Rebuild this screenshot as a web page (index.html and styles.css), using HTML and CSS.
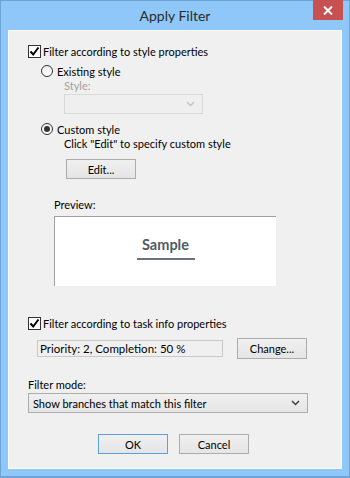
FILE: index.html
```html
<!DOCTYPE html>
<html lang="en">
<head>
    <meta charset="UTF-8">
    <title>Apply Filter</title>
    <link rel="stylesheet" href="styles.css">
</head>
<body>
    <div class="window">
        <div class="titlebar">
            <span class="title">Apply Filter</span>
            <button class="close-button" aria-label="Close">
                <svg width="10" height="9" viewBox="0 0 10 9"><path d="M1 0.5 L9 8.5 M9 0.5 L1 8.5" stroke="#fff" stroke-width="2"/></svg>
            </button>
        </div>

        <div class="client">
            <!-- Style properties -->
            <div class="check-row">
                <span class="checkbox checked">
                    <svg width="11" height="11" viewBox="0 0 11 11"><path d="M1.5 5.5 L4.2 8.5 L9.5 1.5" fill="none" stroke="#000" stroke-width="2"/></svg>
                </span>
                <span>Filter according to style properties</span>
            </div>

            <div class="radio-row">
                <span class="radio"></span>
                <span>Existing style</span>
            </div>
            <div class="field-label disabled">Style:</div>
            <div class="combo combo-disabled">
                <span class="combo-text"></span>
                <svg width="9" height="6" viewBox="0 0 9 6"><path d="M1 1 L4.5 4.5 L8 1" fill="none" stroke="#c4c4c4" stroke-width="1.5"/></svg>
            </div>

            <div class="radio-row radio-row-second">
                <span class="radio checked"></span>
                <span>Custom style</span>
            </div>
            <div class="hint">Click "Edit" to specify custom style</div>
            <button class="btn edit-button">Edit...</button>

            <div class="preview-label">Preview:</div>
            <div class="preview">
                <span class="sample">Sample</span>
                <span class="sample-line"></span>
            </div>

            <!-- Task info properties -->
            <div class="check-row task-row">
                <span class="checkbox checked">
                    <svg width="11" height="11" viewBox="0 0 11 11"><path d="M1.5 5.5 L4.2 8.5 L9.5 1.5" fill="none" stroke="#000" stroke-width="2"/></svg>
                </span>
                <span>Filter according to task info properties</span>
            </div>
            <div class="task-info">
                <div class="readonly-field">Priority: 2, Completion: 50 %</div>
                <button class="btn">Change...</button>
            </div>

            <!-- Filter mode -->
            <div class="mode-label">Filter mode:</div>
            <div class="combo mode-combo">
                <span class="combo-text">Show branches that match this filter</span>
                <svg width="9" height="6" viewBox="0 0 9 6"><path d="M1 1 L4.5 4.5 L8 1" fill="none" stroke="#404040" stroke-width="1.5"/></svg>
            </div>

            <div class="dialog-buttons">
                <button class="btn btn-default">OK</button>
                <button class="btn">Cancel</button>
            </div>
        </div>
    </div>
</body>
</html>
```

FILE: styles.css
```css
/* Base */
* {
    margin: 0;
    padding: 0;
    box-sizing: border-box;
}

body {
    font-family: 'Lato', 'Liberation Sans', sans-serif;
    font-size: 11px;
    color: #000;
    background-color: #8fc8f8;
}

/* Window frame */
.window {
    width: 350px;
    height: 478px;
    background-color: #8fc8f8;
    border: 1px solid #6fa3d6;
    border-bottom-width: 2px;
    display: flex;
    flex-direction: column;
}

.titlebar {
    height: 29px;
    position: relative;
    display: flex;
    align-items: center;
    justify-content: center;
}

.title {
    font-size: 14px;
    color: #2b2b2b;
    padding-bottom: 1px;
}

.close-button {
    position: absolute;
    top: -1px;
    right: 6px;
    width: 30px;
    height: 20px;
    border: none;
    background-color: #c75050;
    display: flex;
    align-items: center;
    justify-content: center;
}

/* Client area */
.client {
    margin: 0 7px 0 7px;
    height: 439px;
    background-color: #f0f0f0;
    box-shadow: inset 0 0 0 1px #fbfbfb;
    padding: 13px 0 0 20px;
    display: flex;
    flex-direction: column;
    align-items: flex-start;
}

.check-row,
.radio-row {
    height: 16px;
    display: flex;
    align-items: center;
    gap: 2px;
    white-space: nowrap;
}

.checkbox {
    width: 13px;
    height: 13px;
    border: 1px solid #333;
    background-color: #fff;
    display: flex;
    align-items: center;
    justify-content: center;
}

.radio-row {
    margin-top: 4px;
    margin-left: 13px;
    gap: 4px;
}

.radio-row-second {
    margin-top: 7px;
}

.radio {
    width: 12px;
    height: 12px;
    border-radius: 50%;
    border: 1px solid #333;
    background: linear-gradient(#f0f0f0, #fdfdfd);
    display: flex;
    align-items: center;
    justify-content: center;
}

.radio.checked::after {
    content: '';
    width: 6px;
    height: 6px;
    border-radius: 50%;
    background-color: #333;
}

.field-label,
.hint {
    margin-left: 36px;
    line-height: 14px;
}

.disabled {
    color: #a0a0a0;
}

/* Combo boxes */
.combo {
    height: 20px;
    display: flex;
    align-items: center;
    justify-content: space-between;
    padding: 0 7px 0 4px;
    border: 1px solid #acacac;
    background: linear-gradient(#f0f0f0, #e5e5e5);
}

.combo-disabled {
    margin-top: 1px;
    margin-left: 36px;
    width: 139px;
    border-color: #d9d9d9;
    background: #efefef;
}

.mode-combo {
    margin-top: 1px;
    width: 280px;
}

/* Buttons */
.btn {
    width: 70px;
    height: 20px;
    font-family: inherit;
    font-size: 11px;
    color: #000;
    border: 1px solid #acacac;
    background: linear-gradient(#f0f0f0, #e5e5e5);
}

.btn-default {
    border-color: #5aa0e6;
}

.edit-button {
    margin-top: 8px;
    margin-left: 38px;
}

/* Preview */
.preview-label {
    margin-top: 19px;
    margin-left: 26px;
    line-height: 14px;
}

.preview {
    margin-top: 4px;
    margin-left: 26px;
    width: 222px;
    height: 70px;
    background-color: #fff;
    border-top: 1px solid #a0a0a0;
    border-left: 1px solid #a0a0a0;
    display: flex;
    flex-direction: column;
    align-items: center;
    padding-top: 20px;
}

.sample {
    font-weight: bold;
    font-size: 14.5px;
    line-height: 16px;
    color: #505a68;
}

.sample-line {
    margin-top: 5px;
    width: 58px;
    height: 2px;
    background-color: #6b7380;
}

/* Task info */
.task-row {
    margin-top: 29px;
}

.task-info {
    margin-top: 7px;
    margin-left: 9px;
    height: 21px;
    display: flex;
    align-items: center;
    gap: 14px;
}

.task-info .btn {
    height: 21px;
}

.readonly-field {
    width: 186px;
    height: 17px;
    line-height: 15px;
    padding-left: 2px;
    border: 1px solid #c8c8c8;
    background-color: #f0f0f0;
    font-size: 11.5px;
    white-space: nowrap;
}

/* Filter mode */
.mode-label {
    margin-top: 19px;
    line-height: 14px;
}

.dialog-buttons {
    margin-top: 21px;
    margin-left: 70px;
    display: flex;
    gap: 11px;
}
```
